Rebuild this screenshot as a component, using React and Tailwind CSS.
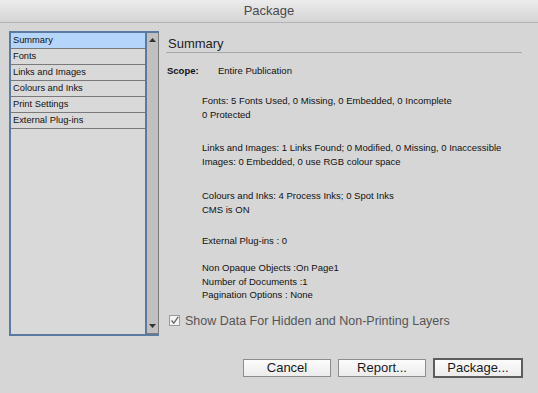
import React from "react";

const items = ["Summary", "Fonts", "Links and Images", "Colours and Inks", "Print Settings", "External Plug-ins"];

function Btn({ children, primary }) {
  return (
    <div
      className={
        "flex items-center justify-center bg-gradient-to-b from-[#fcfcfc] to-[#ececec] text-[13px] text-[#1a1a1a] " +
        (primary ? "w-[90px] h-[20px] border-2 border-[#5c5c5c]" : "w-[88px] h-[18px] border border-[#8c8c8c]")
      }
    >
      {children}
    </div>
  );
}

export default function App() {
  return (
    <div
      className="w-[538px] h-[393px] bg-[#d6d6d6] flex flex-col overflow-hidden"
      style={{ fontFamily: '"Liberation Sans", Arial, sans-serif' }}
    >
      <div className="h-[23px] shrink-0 flex items-center justify-center bg-gradient-to-b from-[#ececec] to-[#d4d4d4] border-b border-[#b4b4b4] text-[13px] text-[#4a4a4a]">
        Package
      </div>
      <div className="flex pl-[9px] pt-[8px]">
        <div className="w-[150px] h-[305px] flex border-2 border-[#5a7aa2] border-r-0">
          <div className="w-[134px] bg-[#d9d9d9] flex flex-col">
            {items.map((t, i) => (
              <div
                key={t}
                className={
                  "h-[16px] flex items-center pl-[2px] text-[9.3px] text-[#111] border-b border-[#7a7a7a] " +
                  (i === 0 ? "bg-[#b6d5fb]" : "")
                }
              >
                {t}
              </div>
            ))}
          </div>
          <div className="w-[14px] bg-[#c0c0c0] border-l-2 border-[#5a7aa2] border-r border-r-[#7c7c7c] border-b border-b-[#7c7c7c] flex flex-col justify-between items-center py-[5px]">
            <svg width="7" height="4" viewBox="0 0 7 4"><path d="M0 4 L3.5 0 L7 4 Z" fill="#333" /></svg>
            <svg width="7" height="4" viewBox="0 0 7 4"><path d="M0 0 L7 0 L3.5 4 Z" fill="#333" /></svg>
          </div>
        </div>
        <div className="ml-[7px] w-[356px] flex flex-col text-[#111]">
          <div className="pt-[4px] leading-[17px] text-[13px] pl-[2px] border-b border-[#a6a6a6] text-[#222]">Summary</div>
          <div className="mt-[12px] flex text-[9.5px] leading-[11px] pl-[1px]">
            <span className="font-bold w-[51px]">Scope:</span>
            <span>Entire Publication</span>
          </div>
          <div className="pl-[36px] text-[9.5px] leading-[14px]">
            <div className="mt-[18px]">
              <div>Fonts: 5 Fonts Used, 0 Missing, 0 Embedded, 0 Incomplete</div>
              <div>0 Protected</div>
            </div>
            <div className="mt-[19px]">
              <div>Links and Images: 1 Links Found; 0 Modified, 0 Missing, 0 Inaccessible</div>
              <div>Images: 0 Embedded, 0 use RGB colour space</div>
            </div>
            <div className="mt-[20px]">
              <div>Colours and Inks: 4 Process Inks; 0 Spot Inks</div>
              <div>CMS is ON</div>
            </div>
            <div className="mt-[17px]">
              <div>External Plug-ins : 0</div>
            </div>
            <div className="mt-[13px] leading-[13.5px]">
              <div>Non Opaque Objects :On Page1</div>
              <div>Number of Documents :1</div>
              <div>Pagination Options : None</div>
            </div>
          </div>
          <div className="mt-[10px] flex items-center pl-[3px]">
            <div className="w-[11px] h-[11px] border border-[#9a9a9a] bg-[#f4f4f4] flex items-center justify-center">
              <svg width="9" height="9" viewBox="0 0 9 9"><path d="M1.5 4.5 L3.8 7.2 L8.2 0.8" stroke="#6a6a6a" strokeWidth="1.4" fill="none" /></svg>
            </div>
            <span className="ml-[5px] text-[12.5px] text-[#555]">Show Data For Hidden and Non-Printing Layers</span>
          </div>
        </div>
      </div>
      <div className="flex justify-end items-center pr-[15px] mt-[22px] gap-[7px]">
        <Btn>Cancel</Btn>
        <Btn>Report...</Btn>
        <Btn primary>Package...</Btn>
      </div>
    </div>
  );
}
